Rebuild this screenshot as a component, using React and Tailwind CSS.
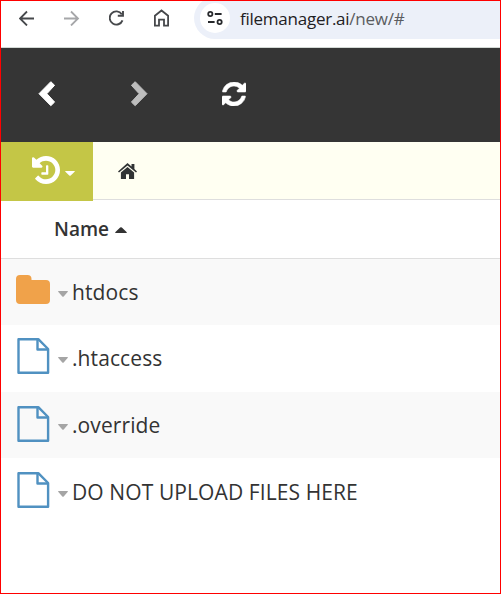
import React from 'react';

function BackArrow() {
  return (
    <svg className="ml-[18px] h-4 w-4" viewBox="0 0 16 16" fill="none" stroke="#46484b" strokeWidth="1.8">
      <path d="M15 8.500H1.600M8 1.500l-7 7 7 7" />
    </svg>
  );
}

function ForwardArrow() {
  return (
    <svg className="ml-[29px] h-4 w-4" viewBox="0 0 16 16" fill="none" stroke="#a6a7a9" strokeWidth="1.8">
      <path d="M0 8.500h13.400M7 1.500l7 7-7 7" />
    </svg>
  );
}

function Reload() {
  return (
    <svg className="ml-[29px] h-4 w-4" viewBox="0 0 16 16" fill="none" stroke="#46484b" strokeWidth="1.9">
      <path d="M12.800 4.300A6.600 6.600 0 1 0 13.500 10.300M14 1v4.800H8.800" />
    </svg>
  );
}

function BrowserHome() {
  return (
    <svg className="ml-[29px] h-[18px] w-4" viewBox="0 0 16 18" fill="none" stroke="#46484b" strokeWidth="1.8">
      <path d="M.9 6.700 7.500 1.500l6.600 5.200v10H10v-6H5v6H.9z" />
    </svg>
  );
}

function SiteControls() {
  return (
    <svg className="h-4 w-4" viewBox="0 0 16 16" fill="none" stroke="#27292c" strokeWidth="1.8">
      <circle cx="3.300" cy="4" r="2.100" />
      <path d="M7.800 4h6.800M1 12h6.600" />
      <circle cx="12.600" cy="12" r="2.100" />
    </svg>
  );
}

function SmallCaret({ className }) {
  return (
    <svg className={className} viewBox="0 0 10 6" preserveAspectRatio="none" fill="currentColor">
      <path d="M.5 0h9q.7.3.1.9L5.700 5.400Q5 6 4.300 5.400L.4.9Q-.2.3.5 0z" />
    </svg>
  );
}

function FolderIcon() {
  return (
    <svg className="h-[29px] w-[36px]" viewBox="-.5 0 36 29" fill="#f0a24a">
      <path d="M4.500 0h7.500q4 0 4 4v1h14.500q4 0 4 4v16q0 4-4 4h-26q-4 0-4-4V4q0-4 4-4z" />
    </svg>
  );
}

function FileIcon() {
  return (
    <svg className="h-[38px] w-[36px]" viewBox="-1 -1 36 38" fill="none" stroke="#5091c1" strokeWidth="2.400" strokeLinejoin="round">
      <path d="M2.500 1.200H22.300L32.100 11v23.800H2.500z" />
      <path d="M21.500 1.200v10.300h10.300" />
    </svg>
  );
}

const files = [
  { name: 'htdocs', folder: true, row: 'h-[66px] bg-[#f9f9f9]' },
  { name: '.htaccess', row: 'h-[67px] pb-0.5' },
  { name: '.override', row: 'h-[66px] bg-[#f9f9f9]' },
  { name: 'DO NOT UPLOAD FILES HERE', row: 'h-[67px]' },
];

export default function App() {
  return (
    <div className="flex h-[594px] w-[501px] flex-col overflow-hidden border border-[#ff0000] bg-white font-['Open_Sans',sans-serif] text-[#333]">
      <header className="flex h-[47px] shrink-0 items-start border-b border-[#d3d9d5]">
        <div className="flex h-[33px] items-center">
          <BackArrow />
          <ForwardArrow />
          <Reload />
          <BrowserHome />
        </div>
        <div className="ml-6 h-[38px] flex-1 overflow-hidden">
          <div className="-mt-1 flex h-[42px] items-center rounded-l-full bg-[#ecf0f9] pl-1.5">
            <span className="flex h-[30px] w-[30px] items-center justify-center rounded-full bg-white">
              <SiteControls />
            </span>
            <span className="ml-[10px] mt-0.5 whitespace-nowrap text-[17px] leading-6 tracking-[-0.25px] text-[#1f2023]">
              filemanager.ai<span className="text-[#5a5c60]">/new/#</span>
            </span>
          </div>
        </div>
      </header>

      <nav className="flex h-[94px] shrink-0 items-center bg-[#353535]">
        <svg className="-mt-[3px] ml-[37px] h-[26px] w-[18px]" viewBox="0 0 18 26" fill="#fff" stroke="#fff" strokeLinejoin="round">
          <path d="M1 12.700 12.800.7 16.600 4.300 8.900 12.700l7.700 8.400-3.800 3.600z" />
        </svg>
        <svg className="-mt-[3px] ml-[74px] h-[26px] w-[18px]" viewBox="0 0 18 26" fill="#bdbdbd" stroke="#bdbdbd" strokeLinejoin="round">
          <path d="M17 12.700 5.200.7 1.400 4.300 9.100 12.700l-7.700 8.400 3.800 3.600z" />
        </svg>
        <svg className="-mt-[2px] ml-[74px] h-6 w-6" viewBox="0 0 1536 1536" fill="#fff" stroke="#fff" strokeWidth="36">
          <path d="M1511 928q0 5-1 7-64 268-268 434.500T764 1536q-146 0-282.500-55T238 1324l-129 129q-19 19-45 19t-45-19-19-45V960q0-26 19-45t45-19h448q26 0 45 19t19 45-19 45l-137 137q71 66 161 102t187 36q134 0 250-65t186-179q11-17 53-117 8-23 30-23h192q13 0 22.500 9.500t9.500 22.500zm25-800v448q0 26-19 45t-45 19h-448q-26 0-45-19t-19-45 19-45l138-138Q969 256 768 256q-134 0-250 65T332 500q-11 17-53 117-8 23-30 23H50q-13 0-22.500-9.500T18 608v-7q65-268 270-434.500T768 0q146 0 284 55.500T1297 212l130-129q19-19 45-19t45 19 19 45z" />
        </svg>
      </nav>

      <div className="flex h-[59px] shrink-0">
        <button className="flex w-[92px] items-center bg-[#c4c646] text-white">
          <svg className="-mt-[3px] ml-[31px] h-7 w-7" viewBox="0 0 1536 1536" fill="currentColor">
            <path d="M1536 768q0 156-61 298t-164 245-245 164-298 61q-172 0-327-72.500T177 1260q-7-10-6.500-22.500t8.500-20.500l137-138q10-9 25-9 16 2 23 12 73 95 179 147t225 52q104 0 198.500-40.500T1130 1130t109.500-163.500T1280 768t-40.500-198.500T1130 406 966.500 296.500 768 256q-98 0-188 35.500T420 393l137 138q31 30 14 69-17 40-59 40H64q-26 0-45-19T0 576V128q0-42 40-59 39-17 69 14l130 129Q346 111 483.500 55.500T768 0q156 0 298 61t245 164 164 245 61 298zM896 544v448q0 14-9 23t-23 9H544q-14 0-23-9t-9-23v-64q0-14 9-23t23-9h224V544q0-14 9-23t23-9h64q14 0 23 9t9 23z" />
          </svg>
          <SmallCaret className="ml-[5px] mt-1 h-[5px] w-[10px]" />
        </button>
        <div className="flex h-[58px] flex-1 items-center border-b border-[#dedede] bg-[#fffff2]">
          <svg className="ml-[25px] mt-[2px] h-[17px] w-[19px]" viewBox="0 0 19 17" fill="#303334">
            <path d="m9.500 0 4 3.500V1h2.900v5.100L19 8.400l-1 1.200-8.500-7.200L1 9.600 0 8.400z" />
            <path d="m9.500 3.900 6.600 5.600v6.400H11v-4.700H8v4.700H2.900V9.500z" />
          </svg>
        </div>
      </div>

      <div className="flex h-[58px] shrink-0 items-center border-b border-[#dedede] pl-[53px] text-[19px] font-semibold">
        <span>Name</span>
        <SmallCaret className="ml-[6px] h-[6px] w-[12px] rotate-180" />
      </div>

      <main>
        {files.map((file) => (
          <div key={file.name} className={`flex items-center pl-[14px] ${file.row}`}>
            {file.folder ? <div className="-mt-[5px] flex"><FolderIcon /></div> : <div className="-mt-[3px] flex"><FileIcon /></div>}
            <SmallCaret className="ml-[7px] mt-1 h-[6px] w-[10px] text-[#a5a5a5]" />
            <span className="ml-1 whitespace-nowrap text-[21px] leading-7 tracking-[0.1px]">{file.name}</span>
          </div>
        ))}
      </main>
    </div>
  );
}
